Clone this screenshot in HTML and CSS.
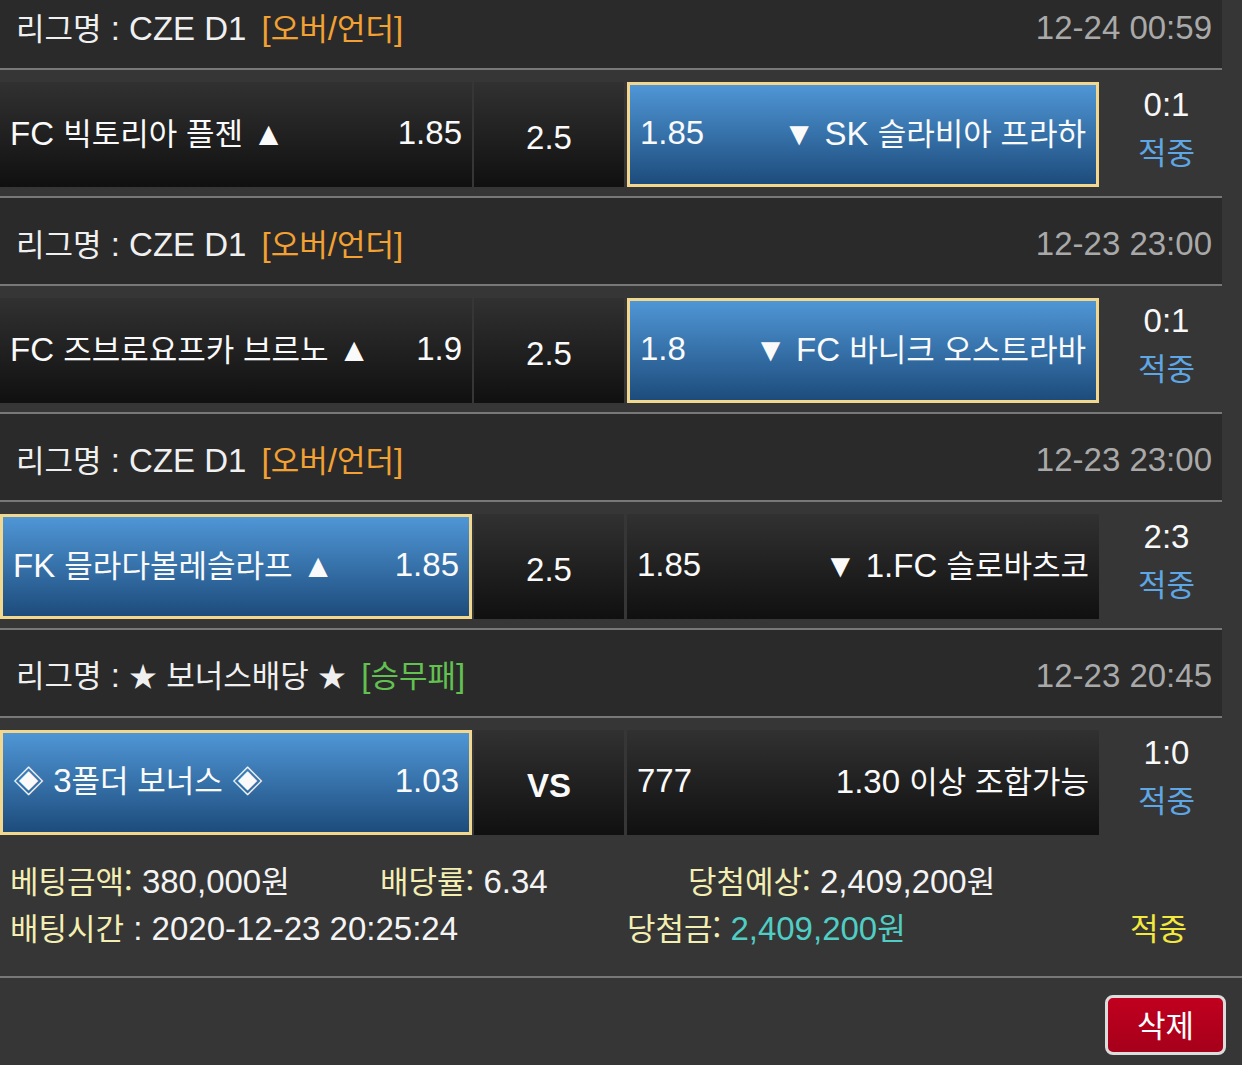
FILE: index.html
```html
<!DOCTYPE html>
<html lang="ko">
<head>
    <meta charset="UTF-8">
    <meta name="viewport" content="width=device-width, initial-scale=1.0">
    <title>배팅내역</title>
    <link rel="stylesheet" href="styles.css">
</head>
<body>
    <div class="bet-list">
        <div class="league">
            <div class="league-name"><span class="k">리그명</span> : CZE D1 <span class="type">[<span class="k">오버</span>/<span class="k">언더</span>]</span></div>
            <div class="league-time">12-24 00:59</div>
        </div>
        <div class="match">
            <div class="cell home"><span class="team">FC <span class="k">빅토리아 플젠</span> ▲</span><span class="odds">1.85</span></div>
            <div class="cell mid">2.5</div>
            <div class="cell away selected"><span class="odds">1.85</span><span class="team">▼ SK <span class="k">슬라비아 프라하</span></span></div>
            <div class="result"><div class="score">0:1</div><div class="status k">적중</div></div>
        </div>

        <div class="league">
            <div class="league-name"><span class="k">리그명</span> : CZE D1 <span class="type">[<span class="k">오버</span>/<span class="k">언더</span>]</span></div>
            <div class="league-time">12-23 23:00</div>
        </div>
        <div class="match">
            <div class="cell home"><span class="team">FC <span class="k">즈브로요프카 브르노</span> ▲</span><span class="odds">1.9</span></div>
            <div class="cell mid">2.5</div>
            <div class="cell away selected"><span class="odds">1.8</span><span class="team">▼ FC <span class="k">바니크 오스트라바</span></span></div>
            <div class="result"><div class="score">0:1</div><div class="status k">적중</div></div>
        </div>

        <div class="league">
            <div class="league-name"><span class="k">리그명</span> : CZE D1 <span class="type">[<span class="k">오버</span>/<span class="k">언더</span>]</span></div>
            <div class="league-time">12-23 23:00</div>
        </div>
        <div class="match">
            <div class="cell home selected"><span class="team">FK <span class="k">믈라다볼레슬라프</span> ▲</span><span class="odds">1.85</span></div>
            <div class="cell mid">2.5</div>
            <div class="cell away"><span class="odds">1.85</span><span class="team">▼ 1.FC <span class="k">슬로바츠코</span></span></div>
            <div class="result"><div class="score">2:3</div><div class="status k">적중</div></div>
        </div>

        <div class="league">
            <div class="league-name"><span class="k">리그명</span> : <span class="star">★</span> <span class="k">보너스배당</span> <span class="star">★</span> <span class="type green">[<span class="k">승무패</span>]</span></div>
            <div class="league-time">12-23 20:45</div>
        </div>
        <div class="match">
            <div class="cell home selected"><span class="team"><span class="mark">◈</span> 3<span class="k">폴더 보너스</span> <span class="mark">◈</span></span><span class="odds">1.03</span></div>
            <div class="cell mid vs">VS</div>
            <div class="cell away"><span class="odds">777</span><span class="team">1.30 <span class="k">이상 조합가능</span></span></div>
            <div class="result"><div class="score">1:0</div><div class="status k">적중</div></div>
        </div>
    </div>

    <div class="summary">
        <div class="summary-line">
            <div class="item w1"><span class="label k">베팅금액:</span> 380,000<span class="k">원</span></div>
            <div class="item w2"><span class="label k">배당률:</span> 6.34</div>
            <div class="item"><span class="label k">당첨예상:</span> 2,409,200<span class="k">원</span></div>
        </div>
        <div class="summary-line">
            <div class="item w3"><span class="label k">배팅시간</span> : 2020-12-23 20:25:24</div>
            <div class="item w4"><span class="label k">당첨금:</span> <span class="win">2,409,200<span class="k">원</span></span></div>
            <div class="item hit k">적중</div>
        </div>
    </div>

    <div class="actions">
        <button class="delete-btn k">삭제</button>
    </div>
</body>
</html>
```

FILE: styles.css
```css
body {
    margin: 0;
    background: #363636;
    color: #f4f4f4;
    font-family: "Liberation Sans", Arial, "Noto Sans CJK KR", sans-serif;
    font-size: 33px;
    overflow: hidden;
}
.k {
    font-family: "Noto Sans CJK KR", sans-serif;
    font-size: 31px;
}
.mark {
    font-size: 31px;
}
.star {
    font-size: 28px;
}
.bet-list {
    width: 1222px;
    margin-top: -20px;
}
.league {
    display: flex;
    justify-content: space-between;
    align-items: center;
    box-sizing: border-box;
    height: 90px;
    padding: 6px 10px 0 16px;
    background: #2a2a2a;
    border-top: 2px solid #787878;
    border-bottom: 2px solid #787878;
    line-height: 40px;
}
.league-name {
    color: #f0f0f0;
}
.type {
    margin-left: 6px;
    color: #f2a132;
}
.type.green {
    color: #62c150;
}
.league-time {
    color: #a9a9a9;
}
.match {
    display: flex;
    height: 126px;
    padding: 12px 0 9px;
    box-sizing: border-box;
}
.cell {
    display: flex;
    align-items: center;
    justify-content: space-between;
    box-sizing: border-box;
    height: 105px;
    padding: 0 10px 4px;
    background: linear-gradient(to bottom, #313131, #101010);
    color: #fafafa;
    line-height: 40px;
    white-space: nowrap;
}
.cell.home, .cell.away {
    width: 472px;
}
.cell.home {
    margin-right: 2px;
}
.cell.mid {
    width: 150px;
    margin-right: 3px;
    justify-content: center;
    padding: 6px 0 0;
}
.cell.vs {
    font-weight: bold;
}
.cell.selected {
    border: 3px solid #f1d88e;
    background: linear-gradient(to bottom, #4f96d6, #1d4c7c);
}
.result {
    flex: 1;
    display: flex;
    flex-direction: column;
    justify-content: center;
    align-items: center;
    padding: 0 0 14px 12px;
    line-height: 46px;
}
.score {
    color: #f8f8f8;
}
.status {
    color: #5ea6e4;
}
.summary {
    padding: 13px 10px 25px;
    border-bottom: 2px solid #787878;
    line-height: 45px;
}
.summary-line {
    display: flex;
}
.item {
    white-space: nowrap;
}
.w1 {
    width: 370px;
}
.w2 {
    width: 308px;
}
.w3 {
    width: 617px;
}
.w4 {
    width: 503px;
}
.label {
    color: #f3eeb2;
}
.win {
    color: #50cdc4;
}
.hit {
    color: #f3e93e;
}
.actions {
    display: flex;
    justify-content: flex-end;
    padding: 17px 16px 0 0;
}
.delete-btn {
    width: 121px;
    height: 60px;
    background: linear-gradient(to bottom, #c0001f, #a6001a);
    color: #fff;
    border: 3px solid #dcdcdc;
    border-radius: 8px;
    line-height: 1;
    padding: 0 0 4px;
    cursor: pointer;
}
```
